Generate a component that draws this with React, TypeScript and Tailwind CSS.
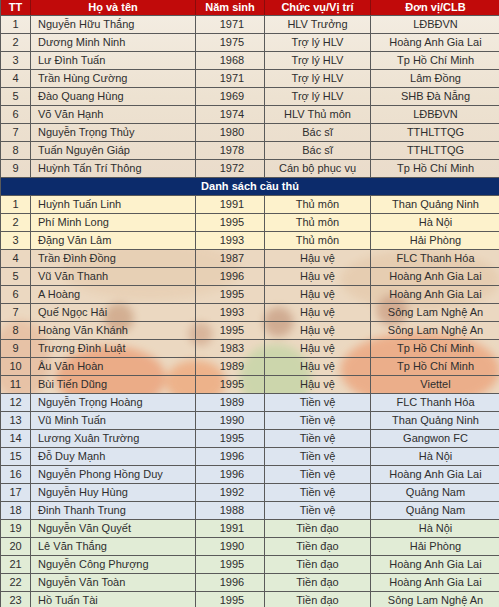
import React from "react";

type Row = [string, string, string, string, string];

const STAFF: Row[] = [
  ["1", "Nguyễn Hữu Thắng", "1971", "HLV Trưởng", "LĐBĐVN"],
  ["2", "Dương Minh Ninh", "1975", "Trợ lý HLV", "Hoàng Anh Gia Lai"],
  ["3", "Lư Đình Tuấn", "1968", "Trợ lý HLV", "Tp Hồ Chí Minh"],
  ["4", "Trần Hùng Cường", "1971", "Trợ lý HLV", "Lâm Đồng"],
  ["5", "Đào Quang Hùng", "1969", "Trợ lý HLV", "SHB Đà Nẵng"],
  ["6", "Võ Văn Hạnh", "1974", "HLV Thủ môn", "LĐBĐVN"],
  ["7", "Nguyễn Trọng Thủy", "1980", "Bác sĩ", "TTHLTTQG"],
  ["8", "Tuấn Nguyên Giáp", "1978", "Bác sĩ", "TTHLTTQG"],
  ["9", "Huỳnh Tấn Trí Thông", "1972", "Cán bộ phục vụ", "Tp Hồ Chí Minh"],
];

const KEEPERS: Row[] = [
  ["1", "Huỳnh Tuấn Linh", "1991", "Thủ môn", "Than Quảng Ninh"],
  ["2", "Phí Minh Long", "1995", "Thủ môn", "Hà Nội"],
  ["3", "Đặng Văn Lâm", "1993", "Thủ môn", "Hải Phòng"],
];

const DEFENDERS: Row[] = [
  ["4", "Trần Đình Đồng", "1987", "Hậu vệ", "FLC Thanh Hóa"],
  ["5", "Vũ Văn Thanh", "1996", "Hậu vệ", "Hoàng Anh Gia Lai"],
  ["6", "A Hoàng", "1995", "Hậu vệ", "Hoàng Anh Gia Lai"],
  ["7", "Quế Ngọc Hải", "1993", "Hậu vệ", "Sông Lam Nghệ An"],
  ["8", "Hoàng Văn Khánh", "1995", "Hậu vệ", "Sông Lam Nghệ An"],
  ["9", "Trương Đình Luật", "1983", "Hậu vệ", "Tp Hồ Chí Minh"],
  ["10", "Âu Văn Hoàn", "1989", "Hậu vệ", "Tp Hồ Chí Minh"],
  ["11", "Bùi Tiến Dũng", "1995", "Hậu vệ", "Viettel"],
];

const MIDFIELDERS: Row[] = [
  ["12", "Nguyễn Trọng Hoàng", "1989", "Tiền vệ", "FLC Thanh Hóa"],
  ["13", "Vũ Minh Tuấn", "1990", "Tiền vệ", "Than Quảng Ninh"],
  ["14", "Lương Xuân Trường", "1995", "Tiền vệ", "Gangwon FC"],
  ["15", "Đỗ Duy Mạnh", "1996", "Tiền vệ", "Hà Nội"],
  ["16", "Nguyễn Phong Hồng Duy", "1996", "Tiền vệ", "Hoàng Anh Gia Lai"],
  ["17", "Nguyễn Huy Hùng", "1992", "Tiền vệ", "Quảng Nam"],
  ["18", "Đinh Thanh Trung", "1988", "Tiền vệ", "Quảng Nam"],
];

const FORWARDS: Row[] = [
  ["19", "Nguyễn Văn Quyết", "1991", "Tiền đạo", "Hà Nội"],
  ["20", "Lê Văn Thắng", "1990", "Tiền đạo", "Hải Phòng"],
  ["21", "Nguyễn Công Phượng", "1995", "Tiền đạo", "Hoàng Anh Gia Lai"],
  ["22", "Nguyễn Văn Toàn", "1996", "Tiền đạo", "Hoàng Anh Gia Lai"],
  ["23", "Hồ Tuấn Tài", "1995", "Tiền đạo", "Sông Lam Nghệ An"],
];

const COLS = "grid grid-cols-[30px_165px_69px_106px_129px]";

function DataRow({ row, bg }: { row: Row; bg: string }) {
  const [tt, name, year, pos, club] = row;
  return (
    <div className={`${COLS} h-[18px] border-b border-[#5a5a5a] text-[11px] leading-[17px] text-[#2e2e2e] ${bg}`}>
      <div className="border-r border-[#5a5a5a] text-center">{tt}</div>
      <div className="border-r border-[#5a5a5a] pl-[7px] whitespace-nowrap">{name}</div>
      <div className="border-r border-[#5a5a5a] text-center pl-1">{year}</div>
      <div className="border-r border-[#5a5a5a] text-center whitespace-nowrap">{pos}</div>
      <div className="text-center whitespace-nowrap">{club}</div>
    </div>
  );
}

function TeamPhoto() {
  return (
    <svg className="absolute inset-0 h-full w-full" viewBox="0 0 499 144" preserveAspectRatio="none">
      <defs>
        <filter id="soft" x="-20%" y="-20%" width="140%" height="140%">
          <feGaussianBlur stdDeviation="4" />
        </filter>
      </defs>
      <rect width="499" height="144" fill="#e9d5bb" />
      <g filter="url(#soft)" opacity="0.85">
        <ellipse cx="150" cy="20" rx="90" ry="30" fill="#e3c8a8" />
        <ellipse cx="420" cy="30" rx="80" ry="30" fill="#e0c2a0" />
        <circle cx="118" cy="68" r="15" fill="#c08f6c" />
        <ellipse cx="110" cy="128" rx="55" ry="32" fill="#e98a5a" />
        <circle cx="200" cy="84" r="12" fill="#c99a7a" />
        <ellipse cx="195" cy="132" rx="30" ry="22" fill="#ec955f" />
        <circle cx="278" cy="72" r="15" fill="#bb8a6c" />
        <ellipse cx="275" cy="128" rx="36" ry="34" fill="#b5d197" />
        <circle cx="392" cy="60" r="16" fill="#c18b6c" />
        <ellipse cx="420" cy="120" rx="80" ry="38" fill="#ea8f5e" />
        <ellipse cx="20" cy="110" rx="30" ry="40" fill="#e2b08e" />
      </g>
    </svg>
  );
}

export default function App() {
  return (
    <div className="w-[499px] h-[607px] overflow-hidden bg-white" style={{ fontFamily: '"Liberation Sans", Arial, sans-serif' }}>
      <div className="border-l border-[#5a5a5a]">
        <div className={`${COLS} h-[16px] bg-[#c10a0a] border-b border-[#5a5a5a] text-[11px] font-bold leading-[15px] text-white`}>
          <div className="border-r border-[#8a0b0b] text-center">TT</div>
          <div className="border-r border-[#8a0b0b] text-center">Họ và tên</div>
          <div className="border-r border-[#8a0b0b] text-center">Năm sinh</div>
          <div className="border-r border-[#8a0b0b] text-center">Chức vụ/Vị trí</div>
          <div className="text-center">Đơn vị/CLB</div>
        </div>

        <div className="bg-gradient-to-b from-[#f3ece1] via-[#ede2d1] to-[#eadccb]">
          {STAFF.map((r) => (
            <DataRow key={"s" + r[0]} row={r} bg="" />
          ))}
        </div>

        <div className="h-[18px] bg-[#0c2b6b] border-b border-[#5a5a5a] text-center text-[11px] font-bold leading-[17px] text-white">
          Danh sách cầu thủ
        </div>

        {KEEPERS.map((r) => (
          <DataRow key={"k" + r[0]} row={r} bg="bg-[#fdf2cc]" />
        ))}

        <div className="relative">
          <TeamPhoto />
          <div className="relative">
            {DEFENDERS.map((r) => (
              <DataRow key={"d" + r[0]} row={r} bg="bg-[#f1e2cf]/30" />
            ))}
          </div>
        </div>

        {MIDFIELDERS.map((r) => (
          <DataRow key={"m" + r[0]} row={r} bg="bg-[#dde5f0]" />
        ))}

        {FORWARDS.map((r) => (
          <DataRow key={"f" + r[0]} row={r} bg="bg-[#e1ecd6]" />
        ))}
      </div>
    </div>
  );
}
